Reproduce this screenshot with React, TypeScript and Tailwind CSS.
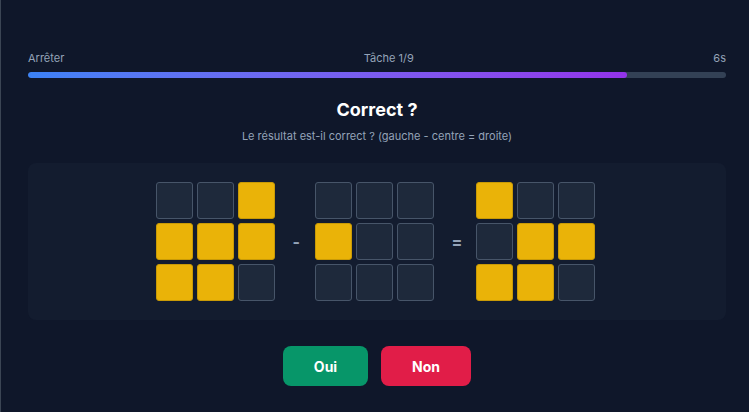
import React from "react";

type Grid = number[];

const left: Grid = [0, 0, 1, 1, 1, 1, 1, 1, 0];
const center: Grid = [0, 0, 0, 1, 0, 0, 0, 0, 0];
const right: Grid = [1, 0, 0, 0, 1, 1, 1, 1, 0];

const Cell: React.FC<{ on: boolean }> = ({ on }) => (
  <div
    className={
      on
        ? "w-[37px] h-[37px] rounded-[3px] bg-[#eab308] border border-[#c99a06]"
        : "w-[37px] h-[37px] rounded-[3px] bg-[#1e293b] border-[1.5px] border-[#475569]"
    }
  />
);

const GridBox: React.FC<{ cells: Grid }> = ({ cells }) => (
  <div className="grid grid-cols-3 gap-[4px]">
    {cells.map((c, i) => (
      <Cell key={i} on={c === 1} />
    ))}
  </div>
);

export default function App() {
  return (
    <div
      className="w-[749px] h-[412px] bg-[#0f172a] border-l border-[#3b4554] overflow-hidden"
      style={{ fontFamily: "Inter, 'Noto Sans', sans-serif" }}
    >
      <div className="pl-[27px] pr-[23px] pt-[51px]">
        {/* header */}
        <div className="flex items-center justify-between text-[11px] leading-[14px] text-[#94a3b8]">
          <span>Arrêter</span>
          <span>Tâche 1/9</span>
          <span>6s</span>
        </div>
        <div className="mt-[7px] h-[6px] w-full rounded-full bg-[#334155] overflow-hidden">
          <div
            className="h-full rounded-full bg-gradient-to-r from-[#3b82f6] to-[#9333ea]"
            style={{ width: "85.8%" }}
          />
        </div>

        {/* title */}
        <h1 className="mt-[20px] text-center text-[18px] leading-[24px] font-bold text-white">
          Correct ?
        </h1>
        <p className="mt-[7px] text-center text-[11px] leading-[14px] text-[#94a3b8]">
          Le résultat est-il correct ? (gauche - centre = droite)
        </p>

        {/* puzzle panel */}
        <div className="mt-[20px] rounded-lg bg-[#131c2f] py-[19px] pr-[4px] flex items-center justify-center gap-[18px]">
          <GridBox cells={left} />
          <span className="text-[#94a3b8] text-[16px] font-bold w-[4px] text-center">-</span>
          <GridBox cells={center} />
          <span className="text-[#94a3b8] text-[16px] font-bold w-[6px] text-center">=</span>
          <GridBox cells={right} />
        </div>

        {/* answers */}
        <div className="mt-[26px] flex justify-center gap-[13px]">
          <button className="w-[85px] h-[40px] rounded-lg bg-[#079669] text-white text-[14px] font-bold">
            Oui
          </button>
          <button className="w-[90px] h-[40px] rounded-lg bg-[#e11d48] text-white text-[14px] font-bold">
            Non
          </button>
        </div>
      </div>
    </div>
  );
}
